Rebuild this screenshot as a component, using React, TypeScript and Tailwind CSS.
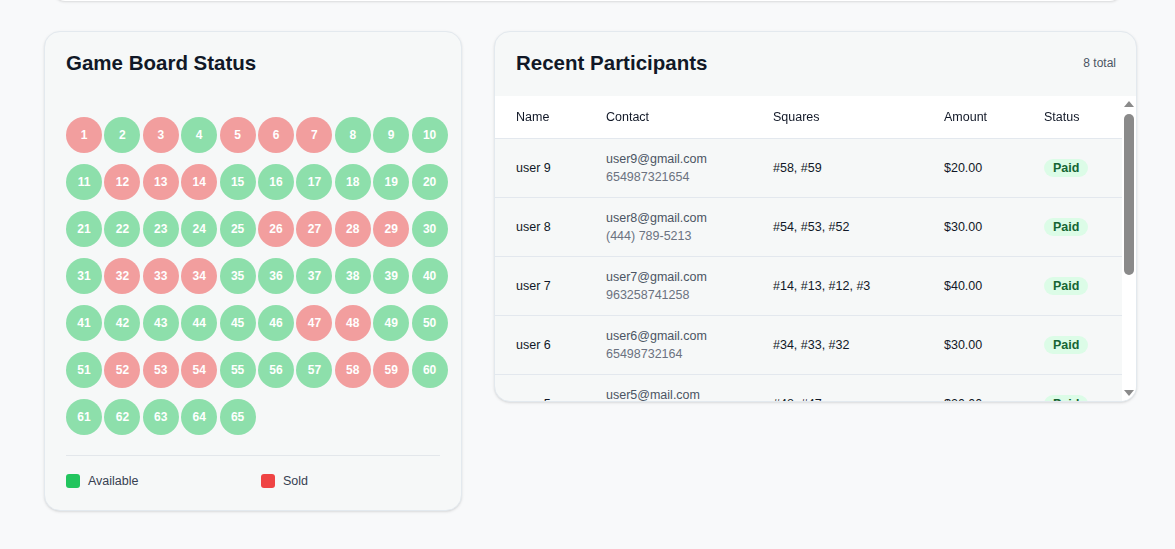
type Participant = {
  name: string;
  email: string;
  phone: string;
  squares: number[];
  amount: number;
};

const participants: Participant[] = [
  { name: "user 9", email: "user9@gmail.com", phone: "654987321654", squares: [58, 59], amount: 20 },
  { name: "user 8", email: "user8@gmail.com", phone: "(444) 789-5213", squares: [54, 53, 52], amount: 30 },
  { name: "user 7", email: "user7@gmail.com", phone: "963258741258", squares: [14, 13, 12, 3], amount: 40 },
  { name: "user 6", email: "user6@gmail.com", phone: "65498732164", squares: [34, 33, 32], amount: 30 },
  { name: "user 5", email: "user5@mail.com", phone: "789456123012", squares: [48, 47], amount: 20 },
  { name: "user 4", email: "user4@gmail.com", phone: "(555) 123-4567", squares: [29, 28, 27, 26], amount: 40 },
  { name: "user 3", email: "user3@gmail.com", phone: "321654987123", squares: [7, 6, 5], amount: 30 },
  { name: "user 2", email: "user2@gmail.com", phone: "147258369147", squares: [1], amount: 10 },
];

const sold = new Set(participants.flatMap((p) => p.squares));
const squares = Array.from({ length: 65 }, (_, i) => i + 1);

const GameBoard = () => {
  return (
    <div className="col-span-2 rounded-2xl border border-[#e3e9ee] bg-[#f6f8f8] pt-[17px] pr-[21px] pb-[19px] pl-[21px] shadow-sm">
      <h2 className="text-[20.5px] leading-7 font-bold text-[#111827]">Game Board Status</h2>
      <div className="mt-[40px] grid grid-cols-10 gap-x-[10px] gap-y-[11px]">
        {squares.map((n) => (
          <div
            key={n}
            className={`flex h-9 w-9 items-center justify-center rounded-full text-xs font-semibold text-white ${
              sold.has(n) ? "bg-[#f29e9e]" : "bg-[#8ddfab]"
            }`}
          >
            {n}
          </div>
        ))}
      </div>
      <div className="mt-5 grid grid-cols-2 gap-4 border-t border-[#e3e7eb] pt-[16px]">
        <div className="flex items-center gap-2 text-[12.5px] text-[#374151]">
          <span className="h-3.5 w-3.5 rounded-[3px] bg-[#22c55e]" />
          Available
        </div>
        <div className="flex items-center gap-2 text-[12.5px] text-[#374151]">
          <span className="h-3.5 w-3.5 rounded-[3px] bg-[#ef4444]" />
          Sold
        </div>
      </div>
    </div>
  );
};

// classic scrollbar look, at scroll position 0
const ScrollRail = () => (
  <div className="flex w-[14px] shrink-0 flex-col items-center bg-white">
    <svg width="10" height="15" viewBox="0 0 10 15" className="shrink-0">
      <path d="M0 11 L5 5 L10 11 Z" fill="#8a8a8a" />
    </svg>
    <div className="mt-[3px] h-[161px] w-[10px] rounded-full bg-[#8a8a8a]" />
    <div className="flex-1" />
    <svg width="10" height="15" viewBox="0 0 10 15" className="shrink-0">
      <path d="M0 4 L5 10 L10 4 Z" fill="#8a8a8a" />
    </svg>
  </div>
);

const ParticipantsTable = () => {
  return (
    <div className="col-span-3 self-start overflow-hidden rounded-2xl border border-[#e3e9ee] bg-[#f6f8f8] shadow-sm">
      <div className="flex items-center justify-between pt-[17px] pr-[20px] pb-[19px] pl-[21px]">
        <h2 className="text-[20.5px] leading-7 font-bold text-[#111827]">Recent Participants</h2>
        <span className="text-xs text-[#4b5563]">{participants.length} total</span>
      </div>
      <div className="flex h-[305px]">
        <div className="min-w-0 flex-1 overflow-y-auto [scrollbar-width:none]">
          <table className="w-full table-fixed border-collapse text-left text-[12.5px] text-[#111827]">
            <colgroup>
              <col className="w-[90px]" />
              <col className="w-[167px]" />
              <col className="w-[171px]" />
              <col className="w-[100px]" />
              <col />
            </colgroup>
            <thead className="sticky top-0 bg-white">
              <tr className="border-b border-[#e3e8ee]">
                <th className="px-[21px] py-3 leading-[18px] font-normal">Name</th>
                <th className="px-[21px] py-3 leading-[18px] font-normal">Contact</th>
                <th className="px-[21px] py-3 leading-[18px] font-normal">Squares</th>
                <th className="px-[21px] py-3 leading-[18px] font-normal">Amount</th>
                <th className="px-[21px] py-3 leading-[18px] font-normal">Status</th>
              </tr>
            </thead>
            <tbody>
              {participants.map((p) => (
                <tr key={p.name} className="border-b border-[#e3e8ee]">
                  <td className="px-[21px] py-[11px] leading-[18px]">{p.name}</td>
                  <td className="px-[21px] py-[11px] leading-[18px]">
                    <div className="text-[#4b5563]">{p.email}</div>
                    <div className="text-[#6b7280]">{p.phone}</div>
                  </td>
                  <td className="px-[21px] py-[11px] leading-[18px]">
                    {p.squares.map((s) => `#${s}`).join(", ")}
                  </td>
                  <td className="px-[21px] py-[11px] leading-[18px]">${p.amount.toFixed(2)}</td>
                  <td className="px-[21px] py-[11px] leading-[18px]">
                    <span className="rounded-full bg-[#dcfce7] px-[9px] py-0.5 text-[12.5px] font-semibold text-[#166534]">
                      Paid
                    </span>
                  </td>
                </tr>
              ))}
            </tbody>
          </table>
        </div>
        <ScrollRail />
      </div>
    </div>
  );
}

export default function App() {
  return (
    <div className="flow-root min-h-screen bg-[#f8f9fa] font-['Liberation_Sans',Arial,sans-serif]">
      <div className="mx-[53px] -mt-[38px] h-[39px] rounded-xl bg-white shadow-sm" />
      <div className="mt-[30px] ml-[44px] grid w-[1093px] grid-cols-5 items-start gap-8">
        <GameBoard />
        <ParticipantsTable />
      </div>
    </div>
  );
}
